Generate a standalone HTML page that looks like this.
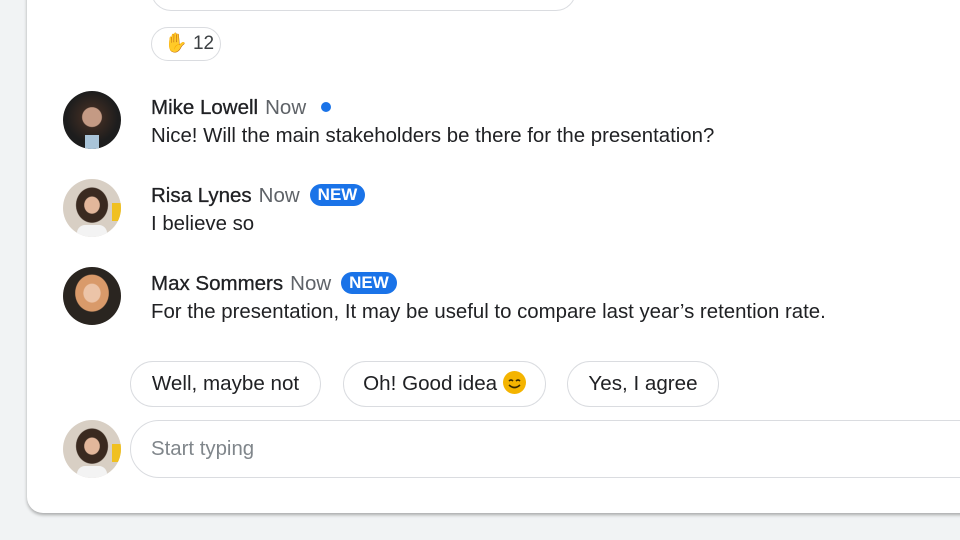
<!DOCTYPE html>
<html><head><style>
*{margin:0;padding:0;box-sizing:border-box}
body{width:960px;height:540px;overflow:hidden;background:#f1f3f4;font-family:"Liberation Sans",Arial,sans-serif;position:relative;color:#202124}
.card{position:absolute;left:27px;top:-40px;width:980px;height:553px;background:#fff;border-radius:16px;box-shadow:0 2px 3px rgba(0,0,0,.3)}
.abs{position:absolute}
.av{position:absolute;width:58px;height:58px;border-radius:50%;overflow:hidden}
.name{position:absolute;left:151px;font-size:20.5px;white-space:nowrap;-webkit-text-stroke:0.3px #202124}
.name .t{color:#5f6368;margin-left:7px;-webkit-text-stroke:0}
.msg{position:absolute;left:151px;font-size:20.4px;white-space:nowrap}
.new{display:inline-block;background:#1a73e8;color:#fff;font-size:17px;font-weight:bold;border-radius:12px;padding:1px 8px;margin-left:10px;vertical-align:2px;line-height:20px;-webkit-text-stroke:0}
.chip{position:absolute;top:361px;height:46px;border:1.5px solid #dadce0;border-radius:23px;font-size:20.6px;line-height:43px;text-align:center}
</style></head><body>
<div class="card"></div>
<div class="abs" style="left:151px;top:-30px;width:425px;height:41px;border:1.5px solid #dadce0;border-radius:20px"></div>
<div class="abs" style="left:151px;top:27px;width:70px;height:34px;border:1.5px solid #dadce0;border-radius:17px;font-size:19px;line-height:31px;padding-left:12px;color:#3c4043"><span style="color:#f0b400">✋</span> 12</div>

<div class="av" style="left:63px;top:91px;background:radial-gradient(circle at 50% 45%,#c49a84 0 22%,#3a2a22 24%,#1d1d1d 60%)"><div style="position:absolute;left:22px;top:44px;width:14px;height:14px;background:#a9c4d8"></div></div>
<div class="name" style="top:96px">Mike Lowell<span class="t">Now</span><span style="display:inline-block;width:10px;height:10px;border-radius:50%;background:#1a73e8;margin-left:15px;vertical-align:2px"></span></div>
<div class="msg" style="top:125px">Nice! Will the main stakeholders be there for the presentation?</div>

<div class="av" style="left:63px;top:179px;background:radial-gradient(ellipse at 50% 45%,#e2b79b 0 18%,#3a2a20 20% 38%,#d8cfc4 40%)"><div style="position:absolute;right:0;top:24px;width:9px;height:18px;background:#f0c020"></div><div style="position:absolute;left:14px;top:46px;width:30px;height:14px;background:#f3f3f3;border-radius:8px 8px 0 0"></div></div>
<div class="name" style="top:184px">Risa Lynes<span class="t">Now</span><span class="new">NEW</span></div>
<div class="msg" style="top:213px">I believe so</div>

<div class="av" style="left:63px;top:267px;background:radial-gradient(ellipse at 50% 45%,#ecc4a8 0 20%,#d99a6a 22% 40%,#2a2520 42%)"></div>
<div class="name" style="top:272px">Max Sommers<span class="t">Now</span><span class="new">NEW</span></div>
<div class="msg" style="top:301px">For the presentation, It may be useful to compare last year’s retention rate.</div>

<div class="chip" style="left:130px;width:191px">Well, maybe not</div>
<div class="chip" style="left:343px;width:203px">Oh! Good idea <span style="display:inline-block;width:23px;height:23px;border-radius:50%;background:#f4b400;vertical-align:-4px;position:relative"><svg width="23" height="23" style="position:absolute;left:0;top:0"><path d="M6 10q2-2 4 0M13 10q2-2 4 0M6 14q5.5 5 11 0" stroke="#3a2a00" stroke-width="1.6" fill="none"/></svg></span></div>
<div class="chip" style="left:567px;width:152px">Yes, I agree</div>

<div class="av" style="left:63px;top:420px;background:radial-gradient(ellipse at 50% 45%,#e2b79b 0 18%,#3a2a20 20% 38%,#d8cfc4 40%)"><div style="position:absolute;right:0;top:24px;width:9px;height:18px;background:#f0c020"></div><div style="position:absolute;left:14px;top:46px;width:30px;height:14px;background:#f3f3f3;border-radius:8px 8px 0 0"></div></div>
<div class="abs" style="left:130px;top:420px;width:860px;height:58px;border:1.5px solid #dadce0;border-radius:29px;font-size:20.4px;line-height:57px;padding-left:20px;color:#80868b">Start typing</div>
</body></html>
